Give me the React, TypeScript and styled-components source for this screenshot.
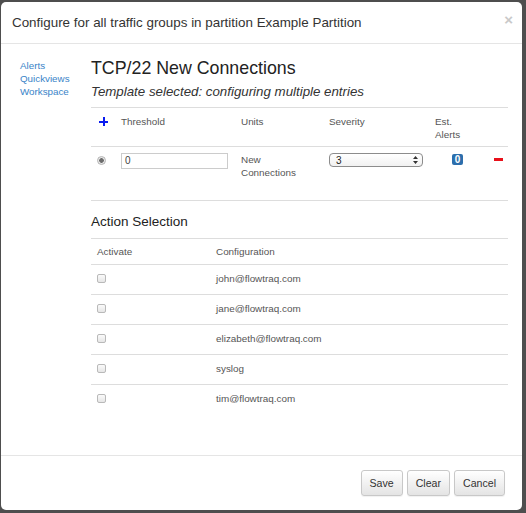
import React from 'react';
import styled, { createGlobalStyle } from 'styled-components';

const Global = createGlobalStyle`
  html, body { margin: 0; padding: 0; background: #4e4e4e; }
  body { font-family: "Liberation Sans", Arial, Helvetica, sans-serif; color: #333; }
  * { box-sizing: border-box; }
`;

const Backdrop = styled.div`
  width: 526px;
  height: 513px;
  padding: 2px 0 0 1px;
  background: #4e4e4e;
  overflow: hidden;
`;

const Modal = styled.div`
  width: 521px;
  height: 508px;
  background: #fff;
  border-radius: 5px;
  display: flex;
  flex-direction: column;
  overflow: hidden;
`;

const Header = styled.div`
  height: 42px;
  flex: none;
  border-bottom: 1px solid #e5e5e5;
  display: flex;
  align-items: center;
  justify-content: space-between;
  padding: 0 9px 0 11px;
`;

const ModalTitle = styled.div`
  font-size: 13.4px;
  color: #333;
  line-height: 18px;
`;

const Close = styled.span`
  align-self: flex-start;
  margin-top: 9px;
  font-size: 15px;
  font-weight: bold;
  color: #c9c9c9;
  line-height: 18px;
`;

const Body = styled.div`
  flex: 1;
  display: flex;
  padding: 13px 14px 0 19px;
`;

const Nav = styled.nav`
  width: 71px;
  flex: none;
  padding-top: 2px;
  display: flex;
  flex-direction: column;
`;

const NavLink = styled.a`
  font-size: 9.8px;
  line-height: 13px;
  color: #3a84c8;
  text-decoration: none;
`;

const Main = styled.div`
  flex: 1;
  min-width: 0;
`;

const Title = styled.h2`
  margin: 0;
  font-size: 17.8px;
  line-height: 22px;
  font-weight: normal;
  color: #222;
`;

const Subtitle = styled.div`
  margin-top: 4px;
  font-size: 13.3px;
  line-height: 18px;
  font-style: italic;
  color: #333;
`;

const ThresholdTable = styled.div`
  margin-top: 6px;
  border-top: 1px solid #ddd;
  border-bottom: 1px solid #ddd;
`;

const ThresholdRow = styled.div<{ $head?: boolean }>`
  display: grid;
  grid-template-columns: 30px 120px 88px 106px 45px 1fr;
  align-items: start;
  padding-top: ${p => (p.$head ? 7 : 6)}px;
  height: ${p => (p.$head ? 39 : 53)}px;
  border-bottom: ${p => (p.$head ? '1px solid #ddd' : 'none')};
  font-size: 9.9px;
  line-height: 13px;
  color: #555;
`;

const Cell = styled.div<{ $pad?: number; $top?: number }>`
  padding-left: ${p => p.$pad ?? 0}px;
  padding-top: ${p => p.$top ?? 0}px;
`;

const Plus = styled.span`
  position: relative;
  display: block;
  width: 9px;
  height: 9px;
  margin-top: 2px;
  &::before, &::after {
    content: '';
    position: absolute;
    background: #0a1cf0;
  }
  &::before { left: 0; right: 0; top: 3.5px; height: 2.5px; }
  &::after { top: 0; bottom: 0; left: 3.5px; width: 2.5px; }
`;

const Radio = styled.span`
  display: block;
  width: 9px;
  height: 9px;
  border-radius: 50%;
  border: 1px solid #b4b4b4;
  background: radial-gradient(circle, #6d6d6d 0 2px, #e9e9e9 2.6px);
`;

const TextInput = styled.div`
  width: 107px;
  height: 16px;
  border: 1px solid #ccc;
  padding-left: 3px;
  font-size: 10px;
  line-height: 14px;
  color: #444;
`;

const Select = styled.div`
  width: 94px;
  height: 14px;
  border: 1px solid #8c8c8c;
  border-radius: 4px;
  background: linear-gradient(#fff, #f1f1f1);
  display: flex;
  align-items: center;
  justify-content: space-between;
  padding: 0 4px 0 6px;
  font-size: 10px;
  color: #222;
`;

const Badge = styled.span`
  display: inline-block;
  width: 11px;
  height: 11px;
  border-radius: 2px;
  background: #2c6eac;
  color: #fff;
  font-weight: bold;
  font-size: 10px;
  line-height: 11px;
  text-align: center;
`;

const Minus = styled.span`
  display: block;
  width: 9px;
  height: 3px;
  margin-top: 5px;
  background: #e8101a;
`;

const SectionTitle = styled.h4`
  margin: 12px 0 0;
  font-size: 13.5px;
  line-height: 18px;
  font-weight: normal;
  color: #222;
`;

const ActionTable = styled.div`
  margin-top: 7px;
`;

const ActionRow = styled.div<{ $head?: boolean }>`
  display: grid;
  grid-template-columns: 119px 1fr;
  align-items: center;
  height: ${p => (p.$head ? 27 : 30)}px;
  border-top: 1px solid #ddd;
  border-bottom: ${p => (p.$head ? '1px solid #ddd' : 'none')};
  margin-bottom: ${p => (p.$head ? -1 : 0)}px;
  padding-left: 6px;
  padding-bottom: ${p => (p.$head ? 1 : 2)}px;
  font-size: 9.9px;
  color: #555;
`;

const Checkbox = styled.span`
  display: block;
  width: 9px;
  height: 9px;
  border-radius: 2px;
  border: 1px solid #b9b9b9;
  background: linear-gradient(#fafafa, #e6e6e6);
`;

const Footer = styled.div`
  flex: none;
  height: 55px;
  border-top: 1px solid #e5e5e5;
  display: flex;
  justify-content: flex-end;
  align-items: flex-start;
  gap: 4px;
  padding: 14px 17px 0 0;
`;

const Button = styled.button`
  height: 26px;
  padding: 0 8px;
  border: 1px solid #c8c8c8;
  border-radius: 3px;
  background: linear-gradient(#fff, #e4e4e4);
  font-family: "Liberation Sans", Arial, sans-serif;
  font-size: 10.6px;
  color: #333;
  box-shadow: 0 1px 1px rgba(0, 0, 0, 0.06);
`;

const SelectArrows = () => (
  <svg width="5" height="8" viewBox="0 0 5 8">
    <path d="M2.5 0 L5 3 L0 3 Z M2.5 8 L5 5 L0 5 Z" fill="#333" />
  </svg>
);

const actions = [
  'john@flowtraq.com',
  'jane@flowtraq.com',
  'elizabeth@flowtraq.com',
  'syslog',
  'tim@flowtraq.com',
];

export default function App() {
  return (
    <>
      <Global />
      <Backdrop>
        <Modal>
          <Header>
            <ModalTitle>Configure for all traffic groups in partition Example Partition</ModalTitle>
            <Close>×</Close>
          </Header>
          <Body>
            <Nav>
              <NavLink href="#">Alerts</NavLink>
              <NavLink href="#">Quickviews</NavLink>
              <NavLink href="#">Workspace</NavLink>
            </Nav>
            <Main>
              <Title>TCP/22 New Connections</Title>
              <Subtitle>Template selected: configuring multiple entries</Subtitle>
              <ThresholdTable>
                <ThresholdRow $head>
                  <Cell $pad={8}><Plus /></Cell>
                  <Cell>Threshold</Cell>
                  <Cell>Units</Cell>
                  <Cell>Severity</Cell>
                  <Cell>Est.<br />Alerts</Cell>
                  <Cell />
                </ThresholdRow>
                <ThresholdRow>
                  <Cell $pad={6} $top={3}><Radio /></Cell>
                  <Cell><TextInput>0</TextInput></Cell>
                  <Cell>New<br />Connections</Cell>
                  <Cell><Select><span>3</span><SelectArrows /></Select></Cell>
                  <Cell $pad={17}><Badge>0</Badge></Cell>
                  <Cell $pad={14}><Minus /></Cell>
                </ThresholdRow>
              </ThresholdTable>
              <SectionTitle>Action Selection</SectionTitle>
              <ActionTable>
                <ActionRow $head>
                  <span>Activate</span>
                  <span>Configuration</span>
                </ActionRow>
                {actions.map(a => (
                  <ActionRow key={a}>
                    <Checkbox />
                    <span>{a}</span>
                  </ActionRow>
                ))}
              </ActionTable>
            </Main>
          </Body>
          <Footer>
            <Button>Save</Button>
            <Button>Clear</Button>
            <Button>Cancel</Button>
          </Footer>
        </Modal>
      </Backdrop>
    </>
  );
}
